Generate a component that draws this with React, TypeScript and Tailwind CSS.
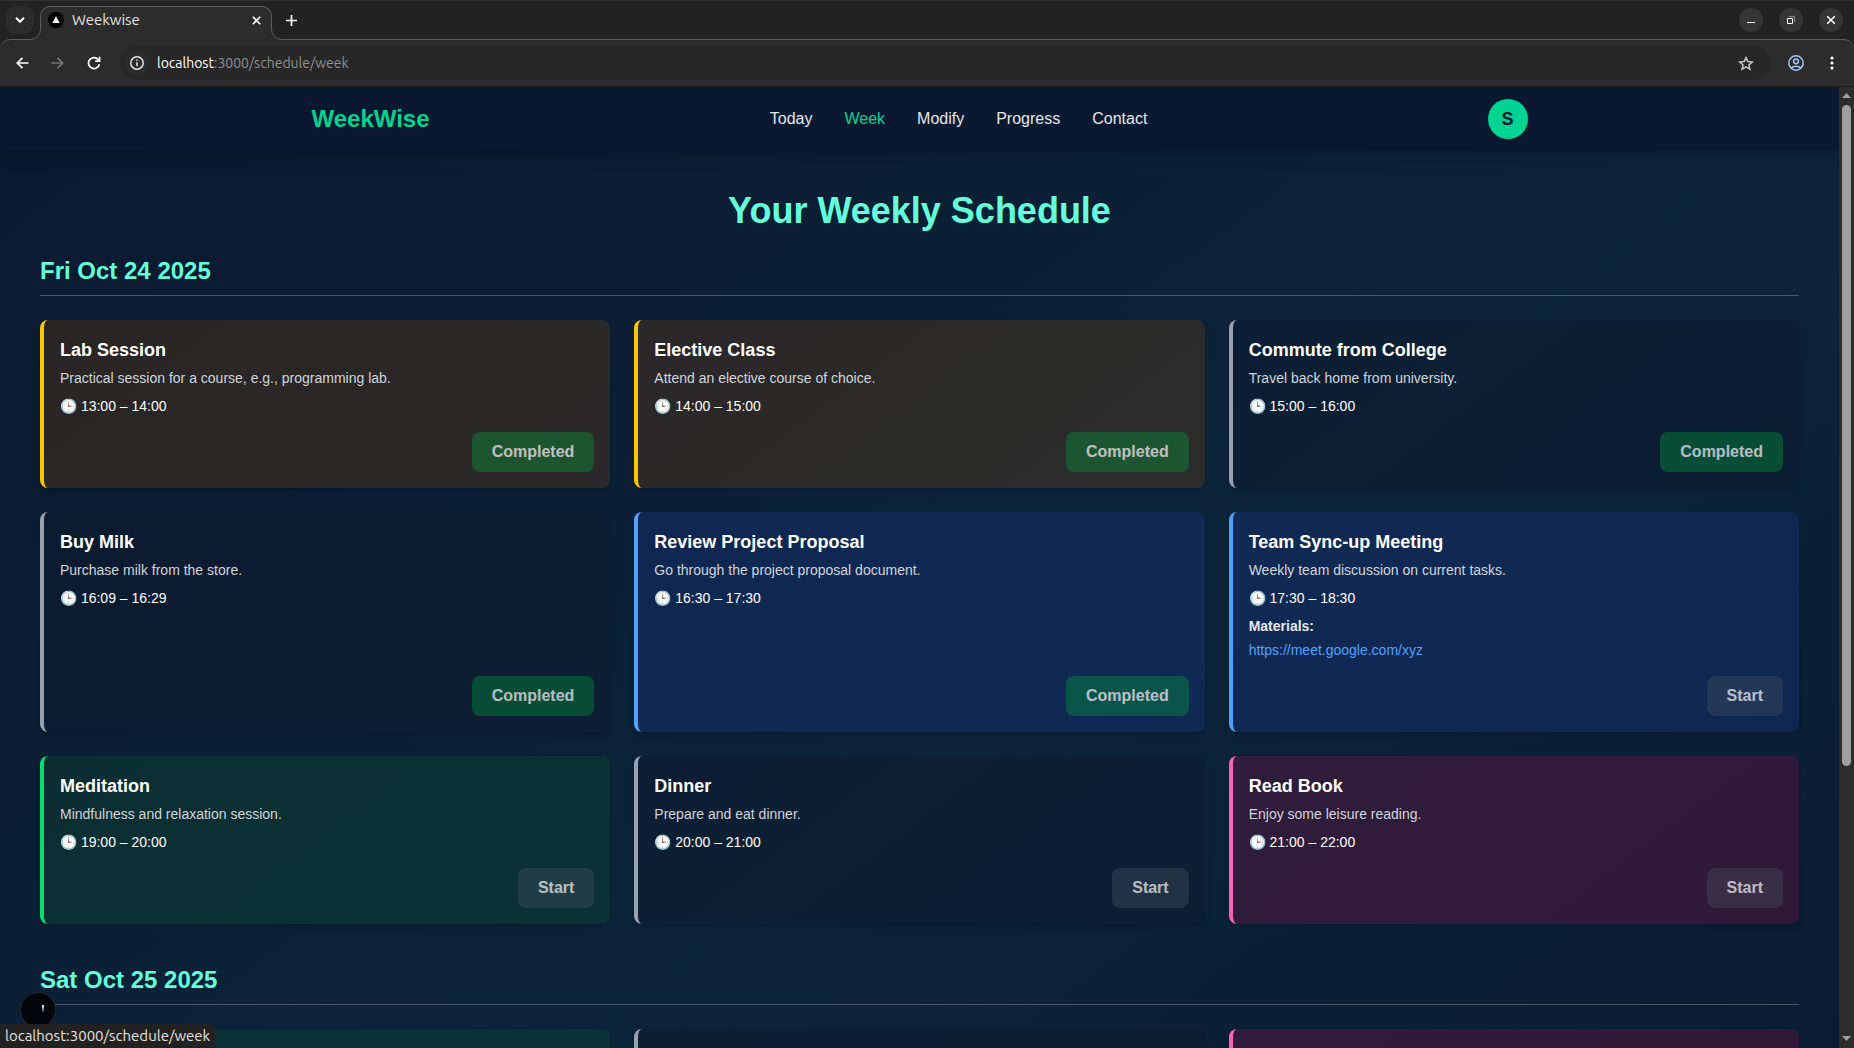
import React from "react";

type Kind = "yellow" | "gray" | "blue" | "green" | "pink";

interface Task {
  title: string;
  text: string;
  time: string;
  kind: Kind;
  done?: boolean;
  link?: string;
}

interface Day {
  date: string;
  tasks: Task[];
}

const kinds: Record<Kind, string> = {
  yellow: "border-yellow-400 bg-yellow-900/30",
  gray: "border-gray-400 bg-gray-900/30",
  blue: "border-blue-400 bg-blue-900/30",
  green: "border-green-400 bg-green-900/30",
  pink: "border-pink-400 bg-pink-900/30",
};

const days: Day[] = [
  {
    date: "Fri Oct 24 2025",
    tasks: [
      { title: "Lab Session", text: "Practical session for a course, e.g., programming lab.", time: "13:00 – 14:00", kind: "yellow", done: true },
      { title: "Elective Class", text: "Attend an elective course of choice.", time: "14:00 – 15:00", kind: "yellow", done: true },
      { title: "Commute from College", text: "Travel back home from university.", time: "15:00 – 16:00", kind: "gray", done: true },
      { title: "Buy Milk", text: "Purchase milk from the store.", time: "16:09 – 16:29", kind: "gray", done: true },
      { title: "Review Project Proposal", text: "Go through the project proposal document.", time: "16:30 – 17:30", kind: "blue", done: true },
      { title: "Team Sync-up Meeting", text: "Weekly team discussion on current tasks.", time: "17:30 – 18:30", kind: "blue", link: "https://meet.google.com/xyz" },
      { title: "Meditation", text: "Mindfulness and relaxation session.", time: "19:00 – 20:00", kind: "green" },
      { title: "Dinner", text: "Prepare and eat dinner.", time: "20:00 – 21:00", kind: "gray" },
      { title: "Read Book", text: "Enjoy some leisure reading.", time: "21:00 – 22:00", kind: "pink" },
    ],
  },
];

const nextDay = { date: "Sat Oct 25 2025", kinds: ["green", "gray", "pink"] as Kind[] };

function TaskCard({ task }: { task: Task }) {
  return (
    <article className={`flex flex-col rounded-lg border-l-4 p-4 shadow-md ${kinds[task.kind]}`}>
      <h3 className="text-lg font-bold text-white">{task.title}</h3>
      <p className="mt-1 text-sm text-gray-300">{task.text}</p>
      <p className="mt-2 text-sm text-white">🕒 {task.time}</p>
      {task.link && (
        <div className="mt-2 text-sm">
          <p className="font-bold text-gray-200">Materials:</p>
          <a href={task.link} className="mt-1 block text-blue-400">{task.link}</a>
        </div>
      )}
      <div className="mt-auto flex justify-end pt-4">
        <button
          type="button"
          className={`h-10 rounded-lg px-5 font-bold text-white opacity-70 ${task.done ? "bg-green-600/50" : "bg-gray-600/50"}`}
        >
          {task.done ? "Completed" : "Start"}
        </button>
      </div>
    </article>
  );
}

function DayHeading({ children }: { children: React.ReactNode }) {
  return <h2 className="mb-6 border-b border-gray-600 pb-2 text-2xl font-bold text-[#64ffda]">{children}</h2>;
}

function BrowserBar() {
  return (
    <div className="shrink-0 bg-[#222222] font-['Ubuntu','Noto_Sans',sans-serif]">
      <div className="flex h-10 items-start border-t border-[#333333]">
        <button type="button" aria-label="Search tabs" className="mt-[5px] ml-1.5 grid size-7 place-items-center rounded-[10px] bg-[#2c2c2c] text-white">
          <svg width="10" height="6" viewBox="0 0 10 6" fill="none" stroke="currentColor" strokeWidth="2"><path d="M1 .8 5 4.8 9 .8" /></svg>
        </button>
        <div className="relative mt-[5px] ml-1.5 flex h-[35px] w-[232px] items-center rounded-t-[10px] border border-b-0 border-[#5c5c5c] bg-[#2c2c2c] pr-2.5 pb-2 pl-[7px]">
          <svg className="absolute bottom-0 -left-[11px]" width="11" height="12" viewBox="0 0 11 12" fill="none">
            <path d="M10.500 0H11V12H0V10.500A10.500 10.500 0 0 0 10.500 0Z" fill="#2c2c2c" />
            <path d="M10.500 0A10.500 10.500 0 0 1 0 10.500" stroke="#5c5c5c" />
          </svg>
          <svg className="absolute -right-[11px] bottom-0" width="11" height="12" viewBox="0 0 11 12" fill="none">
            <path d="M.5 0H0V12H11V10.500A10.500 10.500 0 0 1 .5 0Z" fill="#2c2c2c" />
            <path d="M.5 0A10.500 10.500 0 0 0 11 10.500" stroke="#5c5c5c" />
          </svg>
          <svg width="16" height="16" viewBox="0 0 16 16"><circle cx="8" cy="8" r="8" fill="#000" /><path d="M8 4.300 11.700 11H4.300Z" fill="#fff" /></svg>
          <span className="ml-2 grow text-[15px] leading-5 text-[#e3e3e3]">Weekwise</span>
          <button type="button" aria-label="Close tab" className="text-white">
            <svg width="9" height="9" viewBox="0 0 9 9" stroke="currentColor" strokeWidth="1.600"><path d="M.8.8 8.200 8.200M8.200.8.8 8.200" /></svg>
          </button>
        </div>
        <button type="button" aria-label="New tab" className="mt-3.5 ml-3.5 text-white">
          <svg width="11" height="11" viewBox="0 0 11 11" stroke="currentColor" strokeWidth="1.700"><path d="M5.500 0V11M0 5.500H11" /></svg>
        </button>
        <div className="mt-[7px] mr-[11px] ml-auto flex gap-4 text-white">
          <button type="button" aria-label="Minimize" className="grid size-6 place-items-center rounded-full bg-[#363636]">
            <svg width="10" height="10" viewBox="0 0 10 10" stroke="currentColor"><path d="M1 7.500H9" /></svg>
          </button>
          <button type="button" aria-label="Restore" className="grid size-6 place-items-center rounded-full bg-[#363636]">
            <svg width="10" height="10" viewBox="0 0 10 10" fill="none" stroke="currentColor"><path d="M1.500 3.500H6.500V8.500H1.500Z" /><path d="M3 1.500H8.500V7" stroke="#8c8c8c" /></svg>
          </button>
          <button type="button" aria-label="Close" className="grid size-6 place-items-center rounded-full bg-[#363636]">
            <svg width="10" height="10" viewBox="0 0 10 10" stroke="currentColor" strokeWidth="1.500"><path d="M1.200 1.200 8.800 8.800M8.800 1.200 1.200 8.800" /></svg>
          </button>
        </div>
      </div>
      <div className="-mt-px flex h-12 items-center rounded-t-[10px] border-t border-b border-t-[#5c5c5c] border-b-[#1c1c1c] bg-[#2c2c2c] pr-5 pl-4">
        <button type="button" aria-label="Back" className="text-white">
          <svg width="13" height="12" viewBox="0 0 13 12" fill="none" stroke="currentColor" strokeWidth="1.700"><path d="M12.500 6H1.500M6.500.8 1.300 6 6.500 11.200" /></svg>
        </button>
        <button type="button" aria-label="Forward" className="ml-[22px] text-[#757575]">
          <svg width="13" height="12" viewBox="0 0 13 12" fill="none" stroke="currentColor" strokeWidth="1.700"><path d="M.5 6H11.500M6.500.8 11.700 6 6.500 11.200" /></svg>
        </button>
        <button type="button" aria-label="Reload" className="ml-[23px] text-white">
          <svg width="14" height="14" viewBox="0 0 14 14" fill="none" stroke="currentColor" strokeWidth="1.700"><path d="M12.400 8.300A5.500 5.500 0 1 1 11.200 3.500L12.500 5" /><path d="M12.600.8V5.200H8.200" /></svg>
        </button>
        <div className="ml-[19px] flex h-[34px] grow items-center rounded-full bg-[#272727] pr-4 pl-[5px]">
          <span className="grid size-6 place-items-center rounded-full bg-[#2c2c2c] text-[#e3e3e3]">
            <svg width="14" height="14" viewBox="0 0 14 14" fill="none" stroke="currentColor" strokeWidth="1.500"><circle cx="7" cy="7" r="6.200" /><path d="M7 6.200V10.200M7 3.600V5.100" /></svg>
          </span>
          <span className="ml-2 grow text-sm text-[#8f8f8f]"><span className="text-white">localhost</span>:3000/schedule/week</span>
          <button type="button" aria-label="Bookmark" className="text-[#c7c7c7]">
            <svg width="16" height="15" viewBox="0 0 16 15" fill="none" stroke="currentColor" strokeWidth="1.500"><path d="M8 1.600 9.800 5.600 14.200 6 10.900 8.900 11.900 13.200 8 10.900 4.100 13.200 5.100 8.900 1.800 6 6.200 5.600Z" /></svg>
          </button>
        </div>
        <button type="button" aria-label="Profile" className="ml-[18px] text-[#a8c7fa]">
          <svg width="16" height="16" viewBox="0 0 16 16" fill="none" stroke="currentColor" strokeWidth="1.500"><circle cx="8" cy="8" r="7.200" /><circle cx="8" cy="6.300" r="2.400" /><path d="M3.200 13C5.500 10.600 10.500 10.600 12.800 13" /></svg>
        </button>
        <button type="button" aria-label="Menu" className="ml-[26px] text-white">
          <svg width="4" height="14" viewBox="0 0 4 14" fill="currentColor"><circle cx="2" cy="2" r="1.600" /><circle cx="2" cy="7" r="1.600" /><circle cx="2" cy="12" r="1.600" /></svg>
        </button>
      </div>
    </div>
  );
}

function Scrollbar() {
  return (
    <div className="flex w-[15px] shrink-0 flex-col items-center bg-[#2c2c2c] pt-1.5 pb-[7px]" aria-hidden="true">
      <svg width="9" height="5" viewBox="0 0 9 5" fill="#9f9f9f"><path d="M4.500 0 9 5H0Z" /></svg>
      <div className="flex w-[9px] grow flex-col pt-[7px]">
        <div className="h-[71%] rounded-full bg-[#9f9f9f]" />
      </div>
      <svg width="9" height="5" viewBox="0 0 9 5" fill="#9f9f9f"><path d="M4.500 5 9 0H0Z" /></svg>
    </div>
  );
}

const links = ["Today", "Week", "Modify", "Progress", "Contact"];

export default function App() {
  return (
    <div className="relative flex h-screen flex-col overflow-hidden font-['Liberation_Sans',Arial,sans-serif]">
      <BrowserBar />
      <div className="flex min-h-0 grow">
        <div className="min-w-0 grow overflow-hidden">
          <div className="min-h-[145%] bg-linear-to-br from-[#0a192f] via-[#0c243a] to-[#0a192f]">
            <header className="bg-[#0a192f] shadow-lg">
              <div className="mx-auto flex h-16 max-w-7xl items-center justify-between px-8">
                <a href="#home" className="text-2xl font-bold text-emerald-400">WeekWise</a>
                <nav className="flex gap-8">
                  {links.map((l) => (
                    <a key={l} href={`#${l.toLowerCase()}`} className={l === "Week" ? "text-emerald-400" : "text-gray-200"}>{l}</a>
                  ))}
                </nav>
                <button type="button" className="size-10 rounded-full bg-emerald-400 text-lg font-bold text-[#0a192f]">S</button>
              </div>
            </header>
            <main className="p-10">
              <h1 className="mb-6 text-center text-4xl font-bold text-[#64ffda]">Your Weekly Schedule</h1>
              {days.map((d) => (
                <section key={d.date} className="mb-10">
                  <DayHeading>{d.date}</DayHeading>
                  <div className="grid grid-cols-3 gap-6">
                    {d.tasks.map((t) => <TaskCard key={t.title} task={t} />)}
                  </div>
                </section>
              ))}
              <section>
                <DayHeading>{nextDay.date}</DayHeading>
                <div className="grid grid-cols-3 gap-6">
                  {nextDay.kinds.map((k) => (
                    <article key={k} className={`h-42 rounded-lg border-l-4 shadow-md ${kinds[k]}`} />
                  ))}
                </div>
              </section>
            </main>
          </div>
        </div>
        <Scrollbar />
      </div>
      <button type="button" aria-label="Developer tools" className="absolute bottom-5 left-5 grid size-9 place-items-center rounded-full border border-[#27292c] bg-[#02060b]">
        <svg width="36" height="36" viewBox="0 0 36 36">
          <defs><linearGradient id="bar" x1="0" y1="0" x2="0" y2="1"><stop offset="0" stopColor="#fff" /><stop offset="1" stopColor="#fff" stopOpacity=".2" /></linearGradient></defs>
          <rect x="21" y="12" width="2" height="7" fill="url(#bar)" />
        </svg>
      </button>
      <div className="absolute bottom-0 left-0 flex h-6 items-center rounded-tr-md bg-[#222222] px-[5px] font-['Ubuntu','Noto_Sans',sans-serif] text-[15px] text-[#e3e3e3]">localhost:3000/schedule/week</div>
    </div>
  );
}
